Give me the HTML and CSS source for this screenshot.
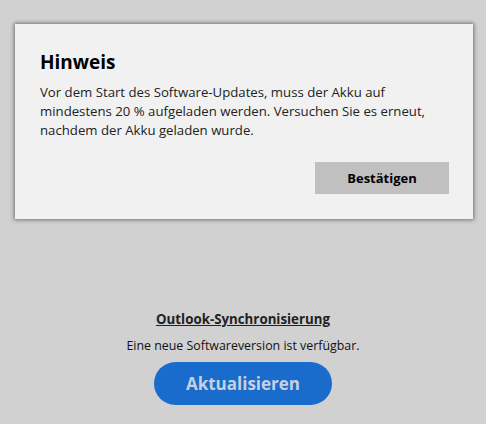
FILE: index.html
```html
<!DOCTYPE html>
<html lang="de">
<head>
<meta charset="utf-8">
<link rel="stylesheet" href="styles.css">
</head>
<body>
<div class="dialog">
  <h2 class="title">Hinweis</h2>
  <p class="msg">Vor dem Start des Software-Updates, muss der Akku auf mindestens 20 % aufgeladen werden. Versuchen Sie es erneut, nachdem der Akku geladen wurde.</p>
  <div class="actions"><button class="confirm">Bestätigen</button></div>
</div>
<div class="main">
  <div class="app">Outlook-Synchronisierung</div>
  <div class="info">Eine neue Softwareversion ist verfügbar.</div>
  <button class="update">Aktualisieren</button>
</div>
</body>
</html>
```
FILE: styles.css
```css
html, body {
  margin: 0;
  padding: 0;
  background: #d1d1d1;
  font-family: "Open Sans", "Noto Sans", sans-serif;
  color: #1a1a1a;
}
body {
  width: 486px;
  height: 424px;
  overflow: hidden;
}
.dialog {
  box-sizing: border-box;
  margin: 24px 0 0 15px;
  width: 458px;
  height: 195px;
  background: #f1f1f1;
  box-shadow: 0 0 4px 1px rgba(0,0,0,0.45);
  padding: 26px 24px 0 25px;
}
.title {
  margin: 0;
  font-size: 19px;
  font-weight: 700;
  line-height: 24px;
  color: #000;
}
.msg {
  margin: 9px 0 0;
  font-size: 13.2px;
  line-height: 19px;
  color: #222;
}
.actions {
  display: flex;
  justify-content: flex-end;
  margin-top: 22px;
}
.confirm {
  width: 134px;
  height: 32px;
  background: #c0c0c0;
  border: none;
  font-family: inherit;
  font-size: 13px;
  font-weight: 700;
  color: #000;
  padding: 0;
  margin-right: 0;
}
.main {
  display: flex;
  flex-direction: column;
  align-items: center;
  margin-top: 91px;
}
.app {
  font-size: 13.3px;
  font-weight: 700;
  text-decoration: underline;
  line-height: 18px;
  color: #222;
}
.info {
  margin-top: 9px;
  font-size: 12.4px;
  line-height: 17px;
  color: #111;
}
.update {
  margin-top: 8px;
  width: 178px;
  height: 43px;
  border: none;
  border-radius: 22px;
  background: #1a6ccc;
  color: #c5d1e2;
  font-family: inherit;
  font-size: 17px;
  font-weight: 700;
  padding: 0;
}
```
